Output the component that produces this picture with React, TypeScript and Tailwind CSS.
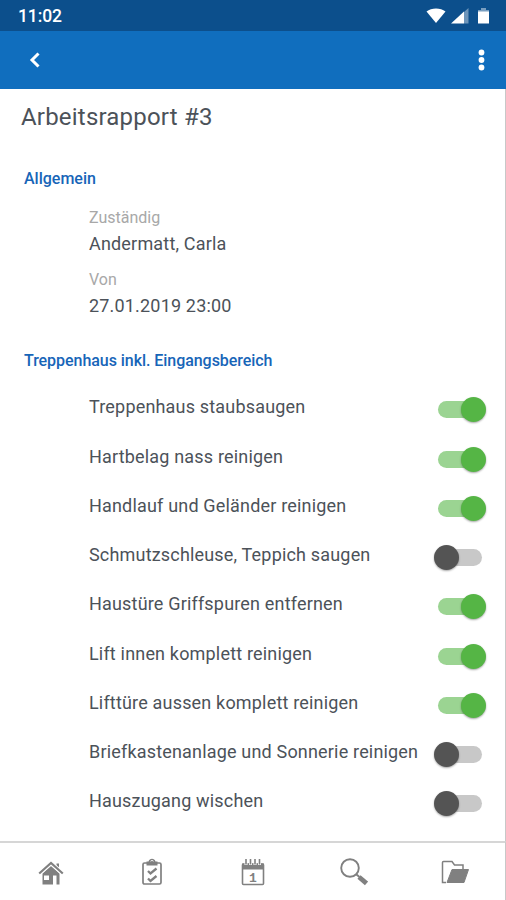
const TASKS = [
  { label: "Treppenhaus staubsaugen", on: true },
  { label: "Hartbelag nass reinigen", on: true },
  { label: "Handlauf und Geländer reinigen", on: true },
  { label: "Schmutzschleuse, Teppich saugen", on: false },
  { label: "Haustüre Griffspuren entfernen", on: true },
  { label: "Lift innen komplett reinigen", on: true },
  { label: "Lifttüre aussen komplett reinigen", on: true },
  { label: "Briefkastenanlage und Sonnerie reinigen", on: false },
  { label: "Hauszugang wischen", on: false },
];

function StatusBar() {
  return (
    <div className="flex h-[31px] items-center justify-between bg-[#0c4f8c] pl-[18px] pr-[16px] text-white">
      <span className="pt-px text-[17.5px] font-medium leading-[30px] tracking-[-0.1px]">11:02</span>
      <div className="flex items-center">
        <svg width="20" height="16" viewBox="0 0 20 16" fill="currentColor">
          <path d="M.5 3.500C5.500-.5 14.500-.5 19.500 3.500L10 15Z" />
        </svg>
        <svg className="ml-[5px]" width="18" height="16" viewBox="0 0 18 16" fill="currentColor">
          <path d="M13 4 17.500 0V15.500H13Z" opacity="0.4" />
          <path d="M0 15.500 13 3.500V15.500Z" />
        </svg>
        <svg className="ml-[9px] mr-px" width="11" height="16" viewBox="0 0 11 16" fill="currentColor">
          <path d="M3 0H8V2H11V4H0V2H3Z" opacity="0.45" />
          <path d="M0 3.500H11V15.500H0Z" />
        </svg>
      </div>
    </div>
  );
}

function AppBar() {
  return (
    <header className="flex h-[58px] items-center justify-between bg-[#106ebe] pl-[28px] pr-[21px] text-white">
      <svg width="12" height="16" viewBox="0 0 12 16" fill="none" stroke="currentColor" strokeWidth="3">
        <path d="M10.500 1.500 4 8 10.500 14.500" />
      </svg>
      <svg width="7" height="22" viewBox="0 0 7 22" fill="currentColor">
        <circle cx="3.500" cy="3.500" r="2.900" />
        <circle cx="3.500" cy="11" r="2.900" />
        <circle cx="3.500" cy="18.500" r="2.900" />
      </svg>
    </header>
  );
}

function Toggle({ on }: { on: boolean }) {
  return (
    <div className={`relative h-[17px] w-[44px] rounded-full ${on ? "bg-[#9bd492]" : "bg-[#c8c8c8]"}`}>
      <span
        className={`absolute -top-[4px] size-[25px] rounded-full shadow-[0_1px_2px_rgba(0,0,0,0.35)] ${
          on ? "left-[23.500px] bg-[#55b545]" : "-left-[3.500px] bg-[#545454]"
        }`}
      />
    </div>
  );
}

function Field({ label, value }: { label: string; value: string }) {
  return (
    <div className="h-[61.500px] pl-[89px]">
      <div className="text-[16px] leading-[24px] text-[#a8a8a8]">{label}</div>
      <div className="text-[18px] leading-[27px] tracking-[0.18px] text-[#4c5259]">{value}</div>
    </div>
  );
}

function TabBar() {
  return (
    <nav className="grid h-[59px] grid-cols-5 border-r border-t-2 border-r-[#c8c8c8] border-t-[#d6d6d6] bg-white text-[#808080]">
      <div className="flex items-center justify-center">
        <svg width="26" height="26" viewBox="0 0 26 26" fill="currentColor">
          <path d="M18.500 4.500H21V10L18.500 8Z" />
          <path d="M13 7 21.500 14.500V25.500H18.500V16.500H15V25.500H4.500V14.500Z" />
          <path d="M6 16.500H11V21H6Z" fill="white" />
          <path d="M1.200 14.500 13 4 24.800 14.500" fill="none" stroke="white" strokeWidth="4.200" />
          <path d="M1.200 14.500 13 4 24.800 14.500" fill="none" stroke="currentColor" strokeWidth="2.200" />
        </svg>
      </div>
      <div className="flex items-center justify-center">
        <svg width="22" height="28" viewBox="0 0 22 28" fill="none" stroke="currentColor">
          <rect x="2" y="5" width="18" height="21" rx="1.500" strokeWidth="1.700" />
          <path d="M5.500 7.500V3.500H7.500C8.500-.2 13.500-.2 14.500 3.500H16.500V7.500Z" fill="currentColor" stroke="none" />
          <path d="M9.500 3.200Q11 1.500 12.500 3.200" stroke="white" strokeWidth="0.900" />
          <path d="M7 13 9.500 15.500 15.500 10.500M7 20.500 9.500 23 15.500 18" strokeWidth="2.300" />
        </svg>
      </div>
      <div className="flex items-center justify-center">
        <svg width="24" height="28" viewBox="0 0 24 28" fill="none" stroke="currentColor">
          <rect x="1.500" y="6" width="21" height="20.500" rx="1" strokeWidth="1.600" />
          <path d="M1 5.500H23V11.500H1Z" fill="currentColor" stroke="none" />
          <path d="M5 0V7M9.500 0V7M14 0V7M18.500 0V7" stroke="white" strokeWidth="3" />
          <path d="M5 1V6.500M9.500 1V6.500M14 1V6.500M18.500 1V6.500" strokeWidth="1.600" />
          <text x="12" y="23.500" textAnchor="middle" fontSize="13" fontWeight="bold" fontFamily="Liberation Mono, monospace" fill="currentColor" stroke="none">1</text>
        </svg>
      </div>
      <div className="flex items-center justify-center">
        <svg width="28" height="28" viewBox="0 0 28 28" fill="none" stroke="currentColor">
          <circle cx="10" cy="10" r="8.800" strokeWidth="1.900" />
          <path d="M16.500 16.500 19.500 19" strokeWidth="2" />
          <path d="M19 19 26.500 25.500" strokeWidth="4.800" />
        </svg>
      </div>
      <div className="flex items-center justify-center">
        <svg width="28" height="26" viewBox="0 0 28 26" fill="none" stroke="currentColor">
          <path d="M5 23.500H1.500V3.500Q1.500 2.500 2.500 2.500H11L13.500 6H22V10" strokeWidth="1.500" />
          <path d="M6 23.500 11 10.500H27.500L23 23.500Z" fill="currentColor" />
        </svg>
      </div>
    </nav>
  );
}

export default function App() {
  return (
    <div className="flex h-[900px] w-[506px] flex-col overflow-hidden bg-white font-[Roboto,sans-serif]">
      <StatusBar />
      <AppBar />
      <main className="flex-1 border-r border-[#c8c8c8]">
        <h1 className="pl-[21px] pt-[12px] text-[24px] leading-[32px] tracking-[0.2px] text-[#4c5259]">
          Arbeitsrapport #3
        </h1>
        <h2 className="mt-[34px] pl-[24px] text-[16px] font-medium leading-[24px] text-[#1765b8]">Allgemein</h2>
        <div className="pt-[15px]">
          <Field label="Zuständig" value="Andermatt, Carla" />
          <Field label="Von" value="27.01.2019 23:00" />
        </div>
        <h2 className="mt-[20px] pl-[24px] text-[16px] font-medium leading-[24px] tracking-[-0.05px] text-[#1765b8]">
          Treppenhaus inkl. Eingangsbereich
        </h2>
        <ul className="pt-[12.200px]">
          {TASKS.map((task) => (
            <li key={task.label} className="flex h-[49.250px] items-center justify-between pl-[89px] pr-[23.500px]">
              <span className="whitespace-nowrap pb-[5px] text-[18px] leading-[24px] tracking-[0.18px] text-[#4c5259]">
                {task.label}
              </span>
              <Toggle on={task.on} />
            </li>
          ))}
        </ul>
      </main>
      <TabBar />
    </div>
  );
}
